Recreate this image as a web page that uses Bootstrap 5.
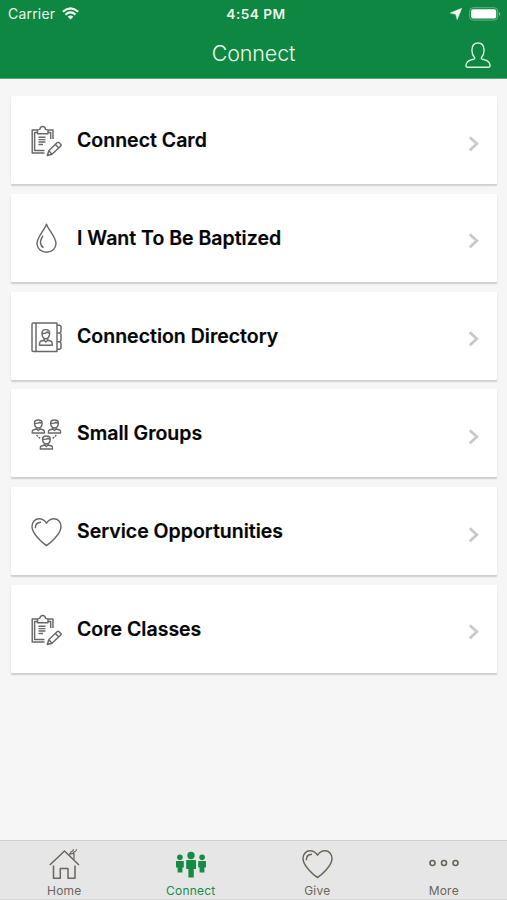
<!DOCTYPE html>
<html lang="en">
<head>
<meta charset="utf-8">
<meta name="viewport" content="width=device-width, initial-scale=1">
<title>Connect</title>
<link href="https://cdn.jsdelivr.net/npm/bootstrap@5.3.0/dist/css/bootstrap.min.css" rel="stylesheet">
<style>
body{font-family:Inter,"Liberation Sans",sans-serif;background:#f6f6f6;height:900px;overflow:hidden}
svg{display:block;flex:none}
.top-area{background:#0e8743;height:79px;border-bottom:1px solid #4fa875;color:#e9f8e8}
.status{height:28px;font-size:14px;line-height:28px;padding:0 6px 0 8px}
.side{width:160px}
.carrier{letter-spacing:.2px}
.clock{font-weight:600;font-size:13.7px;letter-spacing:.45px;padding-left:3px}
.titlebar{height:50px;padding:0 16px}
.titlebar svg{margin-top:3px}
.title-text{font-size:21.5px;font-weight:300;letter-spacing:-.15px;line-height:50px}
.list-area{padding:17px 10px 0 11px;gap:9.75px}
.entry{height:88px;background:#fff;border-radius:1px;padding:0 17px 0 19px;box-shadow:0 1.5px 1.5px rgba(0,0,0,.16);color:#050505;text-decoration:none}
.entry>.line-art{margin-top:2px}
.entry .go{margin-top:7px}
.entry-name{font-size:19.5px;font-weight:600;line-height:24px;margin-left:15px;-webkit-text-stroke:.2px #050505}
.line-art{fill:none;stroke:#686868;stroke-width:1.45;stroke-linejoin:round}
.tabs{height:60px;background:#e6e6e6;border-top:1px solid #cfcfcf;border-bottom:1px solid #d6d6d6;padding:7px 0 0 1px}
.tab-item{font-size:12px;line-height:14px;letter-spacing:.2px;color:#69665c;text-decoration:none}
.tab-item.current{color:#168b4b}
.tab-item svg{margin-bottom:4px}
.tab-item .line-art{stroke:#69665c;stroke-width:1.5}
</style>
<script src="https://cdn.jsdelivr.net/npm/bootstrap@5.3.0/dist/js/bootstrap.bundle.min.js"></script>
</head>
<body class="d-flex flex-column">
<svg width="0" height="0" class="position-absolute" aria-hidden="true">
<defs>
<symbol id="clipboard" viewBox="0 0 32 32"><path d="M8 5H2.2V28H14.5M17.5 5H23V14M8 7.5H4.6V25.4H14.5M17.5 7.5H20.7V14M7.5 8.7V5.5Q7.5 4.8 9.8 4.4Q10.2 1.5 12.7 1.5T15.6 4.4Q18 4.8 18 5.5V8.7ZM8.5 12.2H15.5M8.5 14.6H15.5M8.5 17H15.5M8.5 19.4H13M17.3 30.5L18.8 25.8L27.3 17.5Q28 16.8 28.8 17.5L30.8 19.5Q31.5 20.3 30.7 21L22 29.3ZM18.8 25.8L22 29.3M25.3 19.5L28.7 22.8"/></symbol>
<symbol id="drop" viewBox="0 0 32 32"><path d="M16.5 1.2C14.5 7 7 14.2 7 20.5A9.4 8.7 0 0 0 26 20.5C26 14.2 18.5 7 16.5 1.2ZM13 12.8Q10 17 10.6 20.5Q11.2 23.4 13.5 24.6"/></symbol>
<symbol id="directory" viewBox="0 0 32 32"><path d="M3.2 2H27V30.5H3.2Q2 30.5 2 29.3V3.2Q2 2 3.2 2ZM6 2V30.5M27 4.2H29.8L31 5.5V10.8L29.8 12H27M29.8 12L31 13.2V19.5L29.8 20.7H27M29.8 20.7L31 22V27L29.8 28.3H27M12 12.7Q11.6 8.6 15.8 8.6T19.6 12.7Q19.3 17.5 15.8 17.8Q12.3 17.5 12 12.7ZM12 12.4Q16 12.7 17.3 10.9Q18 12.3 19.6 12.4M14 17.2V19.2L10.5 20.3Q9.5 20.7 9.5 24.2H22.3Q22.3 20.7 21.2 20.3L17.8 19.2V17.2M14 19.2L15.8 21L17.8 19.2"/></symbol>
<symbol id="person-bust" viewBox="0 0 14 15"><path d="M3.2 4.5Q2.8 1 7 1T10.8 4.5Q10.5 8.8 7 9Q3.5 8.8 3.2 4.5ZM3.2 4.3Q7 4.7 8.3 3.2Q9 4.4 10.8 4.3M5.3 8.6V10L1.8 11Q.7 11.4 .7 14H13.3Q13.3 11.4 12.2 11L8.7 10V8.6M5.3 10L7 11.5L8.7 10"/></symbol>
<symbol id="groups" viewBox="0 0 32 32"><use href="#person-bust" x="1.3" y="1" width="14" height="15"/><use href="#person-bust" x="17.5" y="1" width="14" height="15"/><use href="#person-bust" x="9.4" y="17" width="14" height="15"/><path stroke-dasharray="2 1" d="M6.5 17L10.5 21M26.3 17L22.3 21"/></symbol>
<symbol id="heart" viewBox="0 0 32 32"><path d="M16.5 29.5C13 27.5 2 18 2 10.5C2 6 5 2.8 9 2.8C12.5 2.8 14.8 4.6 16.5 7.2C18.2 4.6 20.5 2.8 24 2.8C28 2.8 31 6 31 10.5C31 18 20 27.5 16.5 29.5ZM5.3 12.2Q5.1 6.5 11 6.2"/></symbol>
<symbol id="arrow" viewBox="0 0 12 16"><path d="M1.8 1.3L8.8 7.8L1.8 14.3" fill="none" stroke="#c9c9cb" stroke-width="2.8"/></symbol>
</defs>
</svg>

<header class="top-area flex-shrink-0">
  <div class="status d-flex justify-content-between align-items-center">
    <div class="side d-flex align-items-center"><span class="carrier">Carrier</span>
      <svg style="margin-left:7px;margin-top:-2px" width="17" height="13" viewBox="0 0 17 13" fill="none" stroke="#f4fff4" stroke-width="2.1"><path d="M.8 4.7Q8.5-2.1 16.2 4.7M3.5 7.6Q8.5 3.3 13.5 7.6"/><path d="M5.7 9.7Q8.5 7.5 11.3 9.7L8.5 12.6Z" fill="#f4fff4" stroke="none"/></svg>
    </div>
    <div class="clock">4:54 PM</div>
    <div class="side d-flex justify-content-end align-items-center">
      <svg width="12" height="12" viewBox="0 0 12 12"><path d="M11.7.3L7.2 11.6L5.7 6.3L.3 5Z" fill="#f4fff4" stroke="#f4fff4" stroke-width=".5"/></svg>
      <svg style="margin-left:7px;margin-top:-1px" width="32" height="14" viewBox="0 0 32 14"><rect x=".7" y=".7" width="28" height="12.4" rx="3.5" fill="none" stroke="#6ab287"/><rect x="2.2" y="2.3" width="25" height="9.2" rx="1.8" fill="#fff"/><path d="M30 5Q32.5 7 30 9Z" fill="#83c29c"/></svg>
    </div>
  </div>
  <div class="titlebar d-flex align-items-center justify-content-between">
    <span style="width:26px"></span>
    <div class="title-text">Connect</div>
    <svg width="26" height="28" viewBox="0 0 26 28" fill="none" stroke="#d9f3dc" stroke-width="1.4"><path d="M9.5 16.5C7.5 14.5 6.8 11.5 7 8.5C7.2 4 9.6 2 13 2S18.8 4 19 8.5C19.2 11.5 18.5 14.5 16.5 16.5C16 17.4 16.5 18 17.5 18.2C20.5 18.8 22.8 19.3 24.3 22Q25.3 24.2 25 25.4Q24.8 26.3 23.5 26.3H2.5Q1.2 26.3 1 25.4Q.7 24.2 1.7 22C3.2 19.3 5.5 18.8 8.5 18.2C9.5 18 10 17.4 9.5 16.5Z"/></svg>
  </div>
</header>

<main class="list-area d-flex flex-column flex-grow-1">
  <a class="entry d-flex align-items-center" href="#"><svg class="line-art" width="32" height="32"><use href="#clipboard"/></svg><span class="entry-name">Connect Card</span><svg class="go ms-auto" width="12" height="16"><use href="#arrow"/></svg></a>
  <a class="entry d-flex align-items-center" href="#"><svg class="line-art" width="32" height="32"><use href="#drop"/></svg><span class="entry-name">I Want To Be Baptized</span><svg class="go ms-auto" width="12" height="16"><use href="#arrow"/></svg></a>
  <a class="entry d-flex align-items-center" href="#"><svg class="line-art" width="32" height="32"><use href="#directory"/></svg><span class="entry-name">Connection Directory</span><svg class="go ms-auto" width="12" height="16"><use href="#arrow"/></svg></a>
  <a class="entry d-flex align-items-center" href="#"><svg class="line-art" width="32" height="32"><use href="#groups"/></svg><span class="entry-name">Small Groups</span><svg class="go ms-auto" width="12" height="16"><use href="#arrow"/></svg></a>
  <a class="entry d-flex align-items-center" href="#"><svg class="line-art" width="32" height="32"><use href="#heart"/></svg><span class="entry-name">Service Opportunities</span><svg class="go ms-auto" width="12" height="16"><use href="#arrow"/></svg></a>
  <a class="entry d-flex align-items-center" href="#"><svg class="line-art" width="32" height="32"><use href="#clipboard"/></svg><span class="entry-name">Core Classes</span><svg class="go ms-auto" width="12" height="16"><use href="#arrow"/></svg></a>
</main>

<nav class="tabs row g-0 flex-shrink-0">
  <a class="tab-item col d-flex flex-column align-items-center" href="#"><svg class="line-art" width="32" height="32" viewBox="0 0 32 32"><path d="M1.8 17L16.5 3L31 17M5.5 17.5V30.2H12.3V20.5H20V30.2H27V17.5"/><path stroke-width="1.2" d="M21.8 7.6V5.6H26V11.6M22.5 5.6Q22.3 3.8 24 3.4Q25.3 3 25.4 1.3M25.2 5.6Q25 4.2 26.8 3.7Q28.3 3.2 28.5 1.3"/></svg>Home</a>
  <a class="tab-item current col d-flex flex-column align-items-center" href="#"><svg width="32" height="32" viewBox="0 0 32 32" fill="#168b43"><circle cx="16" cy="7.5" r="3.7"/><path d="M11.7 12H20.5Q21 12 21 12.6V21H18.8V29.5H13.4V21H11.2V12.6Q11.2 12 11.7 12Z"/><circle cx="4.9" cy="9.2" r="2.8"/><circle cx="27.1" cy="9.2" r="2.8"/><path d="M1.4 13H8.4Q8.8 13 8.8 13.5V19.5H7.4V24.5H2.6V19.5H1V13.5Q1 13 1.4 13ZM23.6 13H30.6Q31 13 31 13.5V19.5H29.4V24.5H24.6V19.5H23.2V13.5Q23.2 13 23.6 13Z"/></svg>Connect</a>
  <a class="tab-item col d-flex flex-column align-items-center" href="#"><svg class="line-art" width="32" height="32"><use href="#heart"/></svg>Give</a>
  <a class="tab-item col d-flex flex-column align-items-center" href="#"><svg width="32" height="32" viewBox="0 0 32 32" fill="none" stroke="#69665c" stroke-width="1.6"><circle cx="4.5" cy="15" r="2.5"/><circle cx="16" cy="15" r="2.5"/><circle cx="27.5" cy="15" r="2.5"/></svg>More</a>
</nav>
</body>
</html>
